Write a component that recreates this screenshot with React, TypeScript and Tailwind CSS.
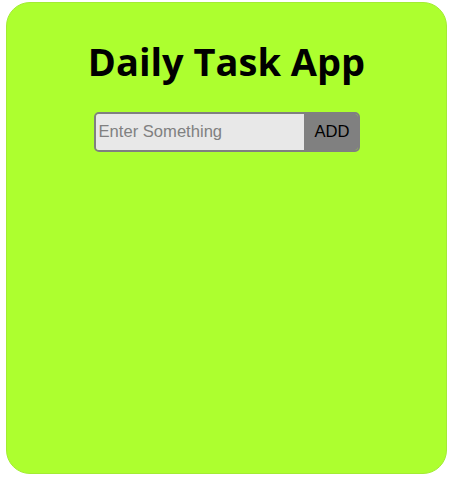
import React, { useState } from "react";

const App: React.FC = () => {
  const [task, setTask] = useState("");

  return (
    <div className="pl-[6px] pt-[2px]">
      <div className="w-[441px] h-[472px] bg-[#adff2f] border border-[#a3ec34] rounded-[24px] flex flex-col items-center">
        <h1
          className="mt-[34px] text-[38px] leading-[48px] font-bold text-black"
          style={{ fontFamily: '"Open Sans", "Noto Sans", sans-serif' }}
        >
          Daily Task App
        </h1>
        <div className="mt-[27px] flex h-[40px] w-[266px] border-2 border-[#808080] rounded-[5px] overflow-hidden">
          <input
            value={task}
            onChange={(e) => setTask(e.target.value)}
            placeholder="Enter Something"
            className="w-[208px] h-full bg-[#e8e8e8] pl-[3px] text-[16.6px] text-black placeholder:text-[#808080] outline-none"
            style={{ fontFamily: '"Liberation Sans", Arial, sans-serif' }}
          />
          <button
            className="flex-1 h-full bg-[#808080] pl-[3px] text-[16.6px] text-black"
            style={{ fontFamily: '"Liberation Sans", Arial, sans-serif' }}
          >
            ADD
          </button>
        </div>
      </div>
    </div>
  );
};

export default App;
